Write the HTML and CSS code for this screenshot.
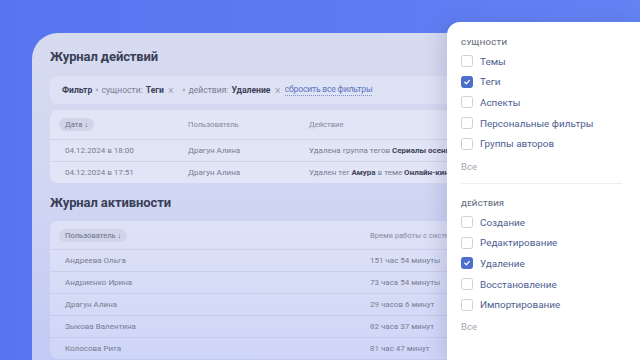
FILE: index.html
```html
<!DOCTYPE html>
<html lang="ru">
<head>
<meta charset="utf-8">
<link rel="stylesheet" href="styles.css">
</head>
<body>
<div class="stage">
  <div class="card">
    <h2 class="title">Журнал действий</h2>
    <div class="filter">
      <span class="strong">Фильтр</span>
      <span class="sep">»</span>
      <span class="muted">сущности:</span>
      <span class="strong">Теги</span>
      <span class="x">×</span>
      <span class="sep gap">»</span>
      <span class="muted">действия:</span>
      <span class="strong">Удаление</span>
      <span class="x">×</span>
      <span class="reset">сбросить все фильтры</span>
    </div>
    <div class="table t1">
      <div class="row head">
        <div><span class="pill">Дата ↓</span></div>
        <div>Пользователь</div>
        <div>Действие</div>
      </div>
      <div class="row">
        <div>04.12.2024 в 18:00</div>
        <div>Драгун Алина</div>
        <div class="clip">Удалена группа тегов <b>Сериалы осень 2024</b></div>
      </div>
      <div class="row">
        <div>04.12.2024 в 17:51</div>
        <div>Драгун Алина</div>
        <div class="clip">Удален тег <b>Амура</b> в теме <b>Онлайн-кинотеатры</b></div>
      </div>
    </div>
    <h2 class="title title2">Журнал активности</h2>
    <div class="table t2">
      <div class="row head">
        <div><span class="pill">Пользователь ↓</span></div>
        <div class="clip">Время работы с системой</div>
      </div>
      <div class="row"><div>Андреева Ольга</div><div>151 час 54 минуты</div></div>
      <div class="row"><div>Андриенко Ирина</div><div>73 часа 54 минуты</div></div>
      <div class="row"><div>Драгун Алина</div><div>29 часов 6 минут</div></div>
      <div class="row"><div>Зыкова Валентина</div><div>82 часа 37 минут</div></div>
      <div class="row"><div>Колосова Рита</div><div>81 час 47 минут</div></div>
    </div>
  </div>

  <div class="panel">
    <div class="group-label">Сущности</div>
    <label class="opt"><span class="box"></span>Темы</label>
    <label class="opt"><span class="box on"><svg viewBox="0 0 12 12"><path d="M3.2 6.2 L5.2 8.1 L8.9 4.1" fill="none" stroke="#fff" stroke-width="1.5" stroke-linecap="round" stroke-linejoin="round"/></svg></span>Теги</label>
    <label class="opt"><span class="box"></span>Аспекты</label>
    <label class="opt"><span class="box"></span>Персональные фильтры</label>
    <label class="opt"><span class="box"></span>Группы авторов</label>
    <div class="all">Все</div>
    <div class="divider"></div>
    <div class="group-label">Действия</div>
    <label class="opt"><span class="box"></span>Создание</label>
    <label class="opt"><span class="box"></span>Редактирование</label>
    <label class="opt"><span class="box on"><svg viewBox="0 0 12 12"><path d="M3.2 6.2 L5.2 8.1 L8.9 4.1" fill="none" stroke="#fff" stroke-width="1.5" stroke-linecap="round" stroke-linejoin="round"/></svg></span>Удаление</label>
    <label class="opt"><span class="box"></span>Восстановление</label>
    <label class="opt"><span class="box"></span>Импортирование</label>
    <div class="all all2">Все</div>
  </div>
</div>
</body>
</html>
```

FILE: styles.css
```css
* { box-sizing: border-box; }
html, body {
  margin: 0;
  width: 640px;
  height: 360px;
  overflow: hidden;
}
body {
  background: linear-gradient(90deg, #5775ef 0%, #5d7cf2 60%, #6383f4 100%);
  font-family: "Roboto", "Noto Sans", sans-serif;
}
.stage {
  position: relative;
  width: 640px;
  height: 360px;
  overflow: hidden;
  padding: 33px 0 0 32px;
}
.card {
  width: 608px;
  height: 327px;
  border-radius: 26px 0 0 0;
  background: linear-gradient(180deg, #d6dbf0 0%, #d2d8f2 40%, #c3caf5 100%);
  padding: 15px 0 0 18px;
  overflow: hidden;
}
.title {
  margin: 0;
  font-size: 13px;
  line-height: 18px;
  font-weight: 700;
  color: #3a3f56;
  letter-spacing: -0.1px;
}
.filter {
  margin-top: 10px;
  height: 28px;
  width: 420px;
  border-radius: 8px;
  background: #dee2f5;
  display: flex;
  align-items: center;
  padding-left: 12px;
  font-size: 8.6px;
  gap: 3px;
  color: #7b8094;
  white-space: nowrap;
}
.filter .strong { font-weight: 700; color: #3c4157; }
.filter .sep { font-size: 7px; color: #8d92a4; }
.filter .gap { margin-left: 4px; }
.filter .x { color: #9ba0b0; font-size: 10px; margin: 0 1.5px; }
.filter .reset {
  color: #5d74be;
  border-bottom: 1px dotted #7d90cc;
  line-height: 11px;
  letter-spacing: -0.2px;
}
.table {
  margin-top: 6px;
  width: 420px;
  border-radius: 8px 0 0 8px;
  background: #e2e5f6;
  font-size: 8px;
  color: #777d92;
}
.row {
  display: grid;
  grid-template-columns: 123px 121px 1fr;
  align-items: center;
  height: 22px;
  padding-left: 15px;
  border-top: 1px solid rgba(160, 168, 205, 0.28);
  white-space: nowrap;
}
.row .clip {
  overflow: hidden;
  max-width: 139px;
}
.t2 .row .clip { max-width: 77px; }
.row.head {
  height: 29px;
  border-top: none;
  color: #868b9e;
  font-size: 7.6px;
}
.row b { color: #3f4459; font-weight: 700; }
.pill {
  display: inline-block;
  margin-left: -6px;
  padding: 0 6px;
  height: 13px;
  line-height: 13px;
  border-radius: 7px;
  background: #d0d5ea;
  color: #6a7086;
}
.title2 { margin-top: 11px; }
.t2 {
  margin-top: 9px;
  background: linear-gradient(180deg, #dee2f7 0%, #cfd5f7 100%);
}
.t2 .row { grid-template-columns: 305px 1fr; }
.t2 .row.head { height: 28px; }

.panel {
  position: absolute;
  left: 447px;
  top: 22px;
  width: 193px;
  height: 338px;
  background: #ffffff;
  border-radius: 13px 0 0 0;
  padding: 15px 18px 0 14px;
  box-shadow: -6px 0 18px rgba(70, 80, 140, 0.18);
}
.group-label {
  font-size: 7.8px;
  line-height: 12px;
  letter-spacing: 0.3px;
  text-transform: uppercase;
  color: #6b7082;
  font-weight: 500;
  margin-bottom: 2px;
}
.opt {
  display: flex;
  align-items: center;
  height: 20.6px;
  font-size: 9.9px;
  color: #4d5e90;
  gap: 7px;
}
.box {
  width: 12px;
  height: 12px;
  border: 1px solid #cdd0da;
  border-radius: 2.5px;
  flex: none;
  display: flex;
}
.box.on {
  background: #4d6ecc;
  border-color: #4d6ecc;
}
.box svg { width: 100%; height: 100%; }
.all {
  margin-top: 6px;
  font-size: 9.5px;
  line-height: 14px;
  color: #a4a7b3;
}
.all2 { margin-top: 5px; }
.divider {
  margin-top: 9px;
  height: 1px;
  background: #eceef2;
  margin-bottom: 14px;
}
```
